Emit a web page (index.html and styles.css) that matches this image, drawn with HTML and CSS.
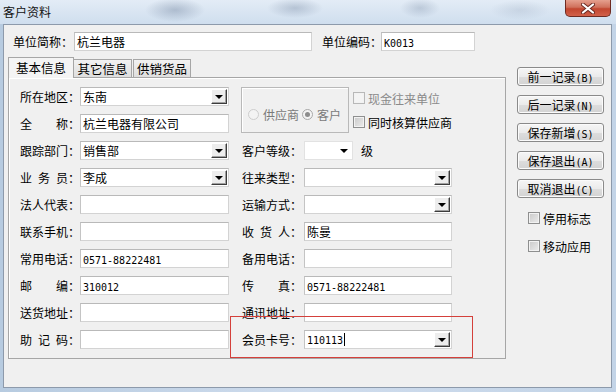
FILE: index.html
```html
<!DOCTYPE html>
<html lang="zh-CN">
<head>
<meta charset="utf-8">
<title>客户资料</title>
<link rel="stylesheet" href="styles.css">
</head>
<body>
<div class="win">
  <div class="titlebar">
    <span class="title">客户资料</span>
    <div class="close">
      <svg width="14" height="11" viewBox="0 0 14 11"><path d="M2 1.5 L12 9.5 M12 1.5 L2 9.5" stroke="#6b2a22" stroke-width="4" stroke-linecap="round"/><path d="M2 1.5 L12 9.5 M12 1.5 L2 9.5" stroke="#fff" stroke-width="2.2" stroke-linecap="round"/></svg>
    </div>
  </div>
  <div class="body">
    <div class="toprow">
      <span class="tlbl">单位简称：</span>
      <div class="field name-field">杭兰电器</div>
      <span class="tlbl tlbl2">单位编码：</span>
      <div class="field code-field"><span class="num">K0013</span></div>
    </div>
    <div class="main">
      <div class="tabarea">
        <div class="tabs">
          <div class="tab active">基本信息</div>
          <div class="tab t2">其它信息</div>
          <div class="tab t3">供销货品</div>
        </div>
        <div class="panel">
          <div class="grid">
            <div class="rgroup">
              <div class="groupbox">
                <span class="radio"></span><span class="rtext">供应商</span>
                <span class="radio on"></span><span class="rtext">客户</span>
              </div>
              <div class="checks">
                <div class="chk dis"><span class="cb light"></span><span>现金往来单位</span></div>
                <div class="chk"><span class="cb"></span><span>同时核算供应商</span></div>
              </div>
            </div>

            <span class="l1">所在地区：</span>
            <div class="f1 field combo"><span>东南</span><span class="dd"><i class="tri"></i></span></div>

            <span class="l1"><span class="j">全称</span>：</span>
            <div class="f1 field">杭兰电器有限公司</div>

            <span class="l1">跟踪部门：</span>
            <div class="f1 field combo"><span>销售部</span><span class="dd"><i class="tri"></i></span></div>
            <span class="l2">客户等级：</span>
            <div class="f2 level"><div class="smallcombo"><i class="tri"></i></div><span class="ji">级</span></div>

            <span class="l1"><span class="j">业务员</span>：</span>
            <div class="f1 field combo"><span>李成</span><span class="dd"><i class="tri"></i></span></div>
            <span class="l2">往来类型：</span>
            <div class="f2 field combo"><span></span><span class="dd"><i class="tri"></i></span></div>

            <span class="l1">法人代表：</span>
            <div class="f1 field"></div>
            <span class="l2">运输方式：</span>
            <div class="f2 field combo"><span></span><span class="dd"><i class="tri"></i></span></div>

            <span class="l1">联系手机：</span>
            <div class="f1 field"></div>
            <span class="l2"><span class="j">收货人</span>：</span>
            <div class="f2 field">陈曼</div>

            <span class="l1">常用电话：</span>
            <div class="f1 field"><span class="num">0571-88222481</span></div>
            <span class="l2">备用电话：</span>
            <div class="f2 field"></div>

            <span class="l1"><span class="j">邮编</span>：</span>
            <div class="f1 field"><span class="num">310012</span></div>
            <span class="l2"><span class="j">传真</span>：</span>
            <div class="f2 field"><span class="num">0571-88222481</span></div>

            <span class="l1">送货地址：</span>
            <div class="f1 field"></div>
            <span class="l2">通讯地址：</span>
            <div class="f2 field"></div>

            <span class="l1"><span class="j">助记码</span>：</span>
            <div class="f1 field"></div>
            <span class="l2">会员卡号：</span>
            <div class="f2 field combo"><span><span class="num">110113</span><i class="caret"></i></span><span class="dd"><i class="tri"></i></span></div>
          </div>
        </div>
      </div>
      <div class="side">
        <div class="btn">前一记录<span class="num">(B)</span></div>
        <div class="btn">后一记录<span class="num">(N)</span></div>
        <div class="btn">保存新增<span class="num">(S)</span></div>
        <div class="btn">保存退出<span class="num">(A)</span></div>
        <div class="btn">取消退出<span class="num">(C)</span></div>
        <div class="sidechecks">
          <div class="chk"><span class="cb"></span><span>停用标志</span></div>
          <div class="chk"><span class="cb"></span><span>移动应用</span></div>
        </div>
      </div>
    </div>
  </div>
  <div class="redbox"></div>
</div>
</body>
</html>
```
FILE: styles.css
```css
* { box-sizing: border-box; }
html, body { margin: 0; padding: 0; }
body {
  width: 616px;
  height: 392px;
  overflow: hidden;
  font-family: "Noto Sans CJK SC", "Noto Sans", sans-serif;
  font-size: 12px;
  color: #000;
  background: #c9d9ea;
}
.win {
  position: relative;
  width: 616px;
  height: 392px;
  display: flex;
  flex-direction: column;
  background: linear-gradient(to right, #b7cbe0, #cfdced 50%, #c3d4e7);
}
.titlebar {
  height: 24px;
  flex: none;
  display: flex;
  align-items: flex-start;
  padding-left: 3px;
  background:
    radial-gradient(ellipse 30px 12px at 175px 10px, rgba(90,110,140,0.35), transparent),
    radial-gradient(ellipse 28px 10px at 295px 8px, rgba(90,110,140,0.3), transparent),
    radial-gradient(ellipse 20px 10px at 420px 8px, rgba(90,110,140,0.25), transparent),
    radial-gradient(ellipse 30px 10px at 520px 10px, rgba(90,110,140,0.15), transparent),
    linear-gradient(to bottom, #e3ecf6, #cfdeee);
}
.title {
  line-height: 24px;
  color: #111;
}
.close {
  margin-left: auto;
  margin-right: 5px;
  width: 46px;
  height: 17px;
  border: 1px solid #6e2b22;
  border-top: none;
  border-radius: 0 0 5px 5px;
  background: linear-gradient(to bottom, #e5a08e 0%, #d0715c 45%, #c2462f 55%, #d2614a 100%);
  display: flex;
  align-items: center;
  justify-content: center;
}
.body {
  flex: 1;
  margin: 0 4px 4px 3px;
  border: 1px solid #8d9aab;
  background: #f0f0f0;
  display: flex;
  flex-direction: column;
}
.toprow {
  display: flex;
  align-items: center;
  height: 19px;
  margin-top: 7px;
  padding-left: 9px;
}
.tlbl { width: 61px; flex: none; white-space: nowrap; }
.tlbl2 { margin-left: 10px; width: 59px; }
.field {
  height: 19px;
  background: #fff;
  border: 1px solid #d3d3d3;
  border-top-color: #b9b9b9;
  border-left-color: #c4c4c4;
  padding-left: 2px;
  line-height: 17px;
  white-space: nowrap;
  overflow: hidden;
}
.name-field { width: 238px; flex: none; }
.code-field { width: 94px; flex: none; }
.num {
  font-family: "DejaVu Sans Mono", "Liberation Mono", monospace;
  font-size: 10px;
}
.main {
  display: flex;
  margin-top: 6px;
}
.tabarea {
  margin-left: 4px;
  width: 498px;
}
.tabs {
  display: flex;
  align-items: flex-end;
  height: 20px;
}
.tab {
  height: 18px;
  border: 1px solid #a6a6a6;
  border-bottom: none;
  background: linear-gradient(to bottom, #f2f2f2, #dedede);
  text-align: center;
  line-height: 17px;
  font-size: 12.5px;
}
.tab.active {
  position: relative;
  z-index: 1;
  width: 66px;
  height: 21px;
  margin-bottom: -1px;
  background: #f4f4f4;
  line-height: 19px;
}
.t2 { width: 58px; border-left: none; }
.t3 { width: 58px; margin-left: 1px; }
.panel {
  height: 282px;
  border: 1px solid #a6a6a6;
  box-shadow: inset 1px 1px 0 #fff;
  padding: 9px 0 0 11px;
}
.grid {
  display: grid;
  grid-template-columns: 60px 149px 13px 62px 148px;
  grid-template-rows: repeat(10, 19px);
  row-gap: 8px;
}
.l1 { grid-column: 1; line-height: 19px; white-space: nowrap; }
.f1 { grid-column: 2; }
.l2 { grid-column: 4; line-height: 19px; white-space: nowrap; }
.f2 { grid-column: 5; }
.j {
  display: inline-block;
  width: 48px;
  text-align: justify;
  text-align-last: justify;
  vertical-align: top;
}
.combo {
  display: flex;
  align-items: center;
  justify-content: space-between;
  padding-right: 1px;
}
.dd {
  width: 16px;
  height: 15px;
  background: #ededed;
  border-top: 1px solid #fff;
  border-left: 1px solid #fff;
  border-right: 1px solid #3c3c3c;
  border-bottom: 1px solid #3c3c3c;
  box-shadow: inset -1px -1px 0 #a0a0a0;
  display: flex;
  align-items: center;
  justify-content: center;
  flex: none;
}
.tri {
  display: block;
  width: 0;
  height: 0;
  border-left: 4px solid transparent;
  border-right: 4px solid transparent;
  border-top: 4px solid #000;
}
.caret {
  display: inline-block;
  width: 1px;
  height: 13px;
  background: #000;
  vertical-align: -2px;
  margin-left: 1px;
}
.rgroup {
  grid-column: 4 / 6;
  grid-row: 1 / 3;
  display: flex;
}
.groupbox {
  width: 117px;
  height: 46px;
  margin-left: -1px;
  border: 1px solid #b9b9b9;
  box-shadow: inset 1px 1px 0 #fff;
  display: flex;
  align-items: center;
  padding: 9px 0 0 6px;
  color: #7a7a7a;
}
.radio {
  width: 11px;
  height: 11px;
  border-radius: 50%;
  border: 1px solid #cdcdcd;
  background: #f3f3f3;
  flex: none;
  margin-right: 4px;
  display: flex;
  align-items: center;
  justify-content: center;
}
.radio.on {
  border-color: #a9a9a9;
  margin-left: 3px;
}
.radio.on::after {
  content: "";
  width: 5px;
  height: 5px;
  border-radius: 50%;
  background: #8c8c8c;
}
.checks {
  margin-left: 4px;
  display: flex;
  flex-direction: column;
}
.chk {
  height: 24px;
  display: flex;
  align-items: center;
  white-space: nowrap;
}
.checks .chk + .chk { margin-top: 2px; }
.chk.dis { color: #8a8a8a; }
.cb {
  width: 12px;
  height: 12px;
  flex: none;
  margin-right: 3px;
  border: 1px solid #8e8f8f;
  background: linear-gradient(135deg, #c9c9c9, #ececec);
  box-shadow: inset 0 0 0 1px #f2f2f2;
}
.cb.light {
  border-color: #b8b8b8;
  background: #f4f4f4;
}
.level {
  display: flex;
  align-items: center;
}
.smallcombo {
  width: 49px;
  height: 19px;
  background: #fff;
  border: 1px solid #e2e2e2;
  display: flex;
  align-items: center;
  justify-content: flex-end;
  padding-right: 4px;
}
.ji { margin-left: 8px; }
.side {
  margin-left: 11px;
  padding-top: 10px;
  display: flex;
  flex-direction: column;
  gap: 9px;
}
.btn {
  width: 87px;
  height: 19px;
  border: 1px solid #8a8a8a;
  border-radius: 3px;
  background: linear-gradient(to bottom, #f6f6f6 0%, #ebebeb 50%, #dddddd 51%, #d3d3d3 100%);
  box-shadow: inset 0 0 0 1px #fbfbfb;
  text-align: center;
  line-height: 17px;
  white-space: nowrap;
}
.sidechecks {
  margin-top: -1px;
  margin-left: 11px;
  display: flex;
  flex-direction: column;
  gap: 4px;
}
.redbox {
  position: absolute;
  left: 230px;
  top: 316px;
  width: 243px;
  height: 42px;
  border: 1px solid #d4403b;
}
```
